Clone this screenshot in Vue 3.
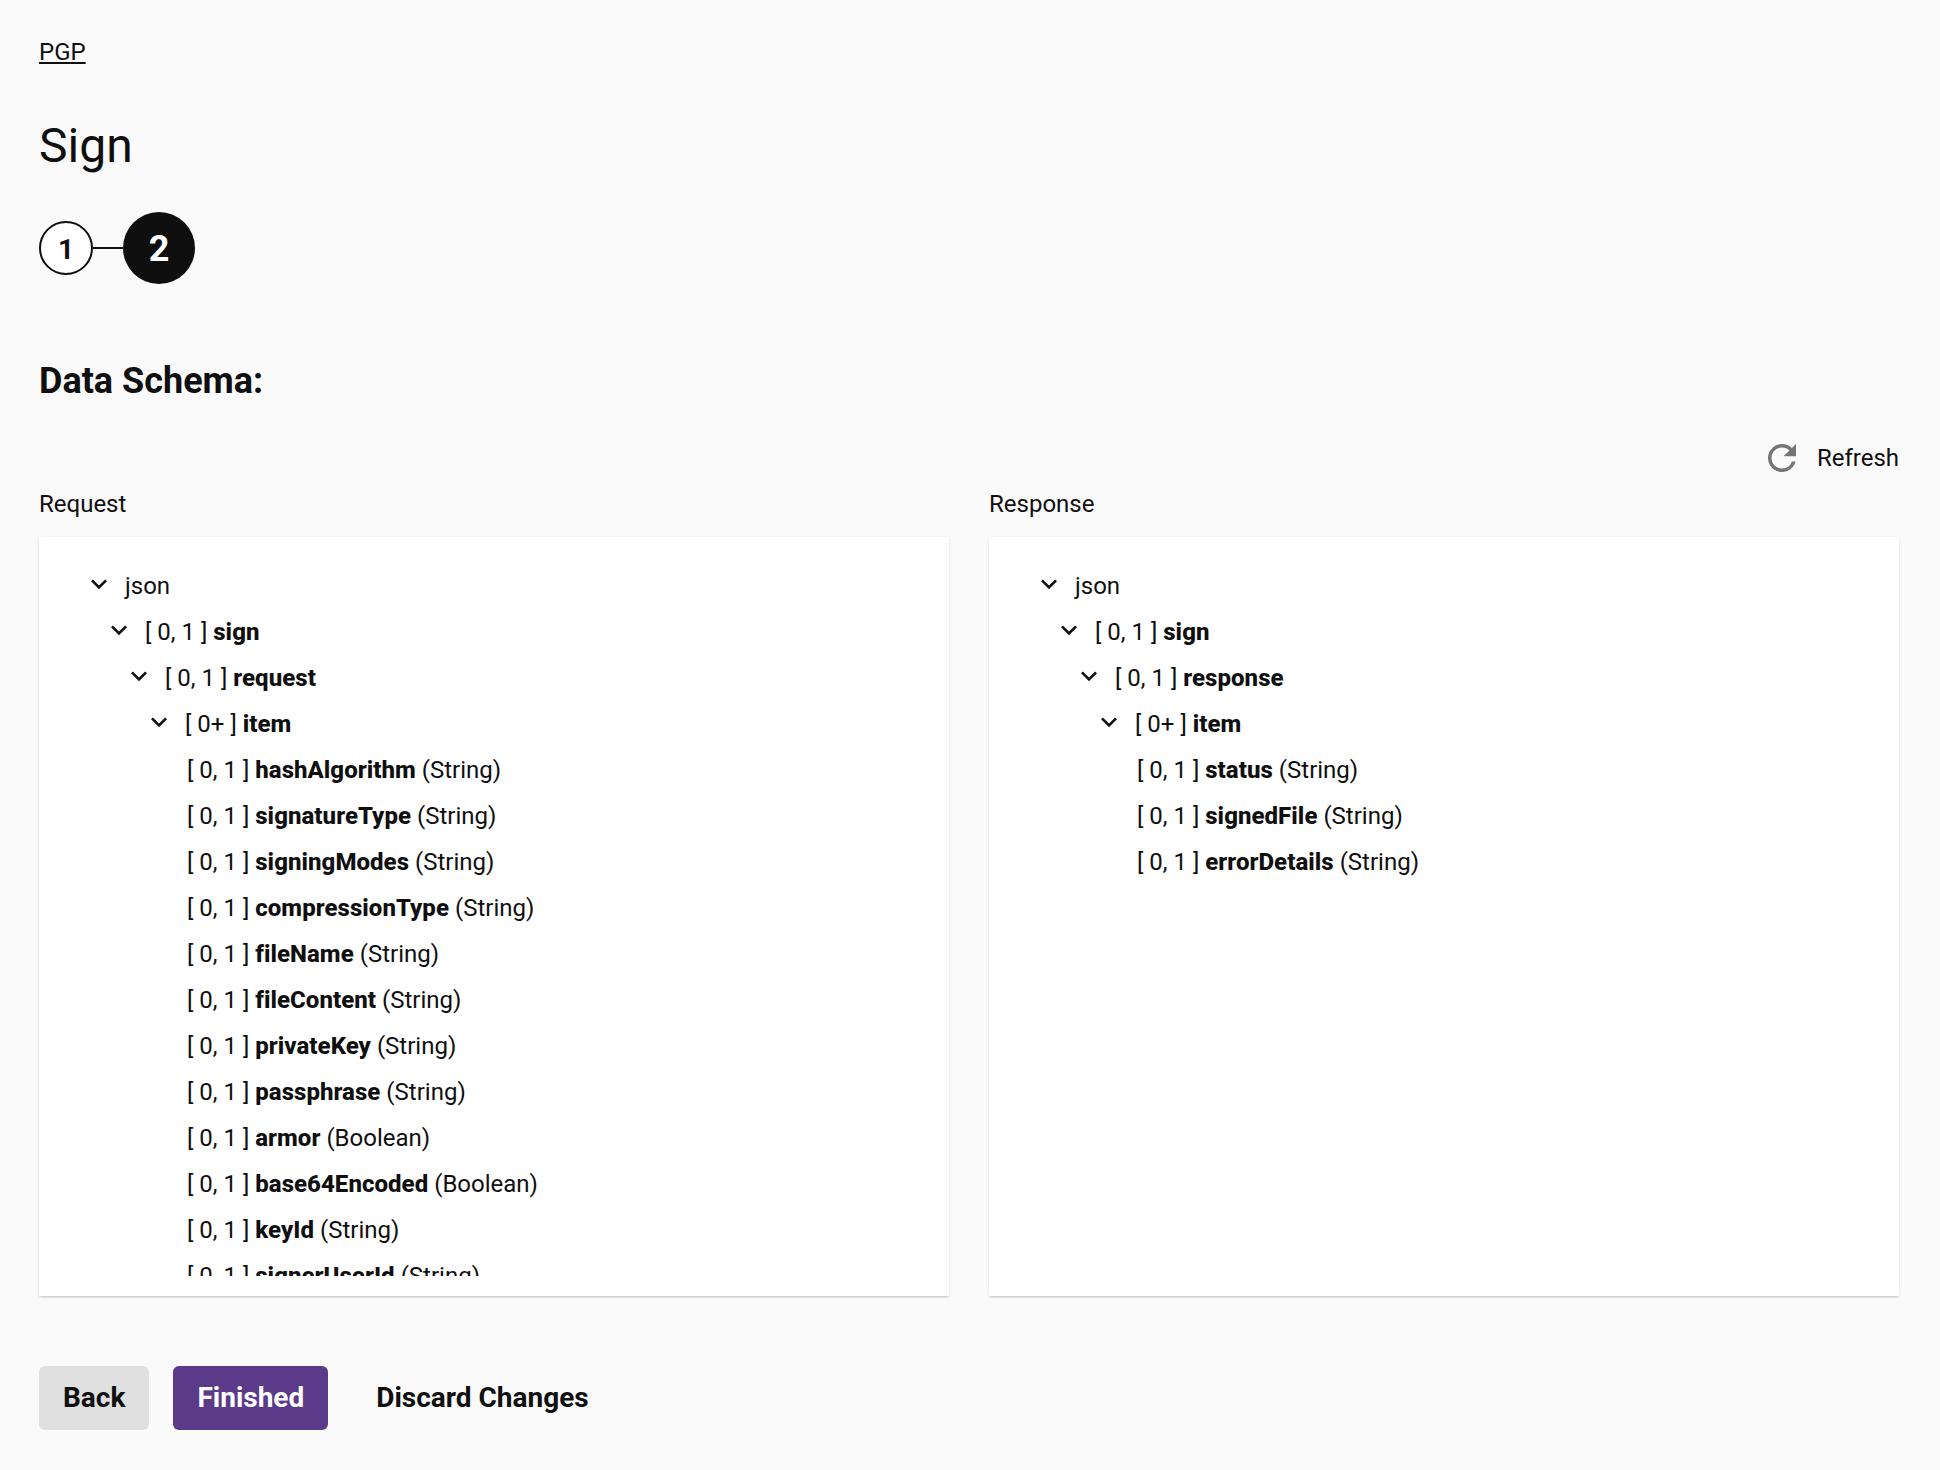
<script setup>
const req = [
  { i: 0, ch: true, t: 'json' },
  { i: 1, ch: true, c: '[ 0, 1 ]', b: 'sign' },
  { i: 2, ch: true, c: '[ 0, 1 ]', b: 'request' },
  { i: 3, ch: true, c: '[ 0+ ]', b: 'item' },
  ...[['hashAlgorithm','String'],['signatureType','String'],['signingModes','String'],['compressionType','String'],['fileName','String'],['fileContent','String'],['privateKey','String'],['passphrase','String'],['armor','Boolean'],['base64Encoded','Boolean'],['keyId','String'],['signerUserId','String']].map(([b, y]) => ({ i: 4, c: '[ 0, 1 ]', b, y }))
]
const res = [
  { i: 0, ch: true, t: 'json' },
  { i: 1, ch: true, c: '[ 0, 1 ]', b: 'sign' },
  { i: 2, ch: true, c: '[ 0, 1 ]', b: 'response' },
  { i: 3, ch: true, c: '[ 0+ ]', b: 'item' },
  ...[['status','String'],['signedFile','String'],['errorDetails','String']].map(([b, y]) => ({ i: 4, c: '[ 0, 1 ]', b, y }))
]
const panels = [{ title: 'Request', rows: req }, { title: 'Response', rows: res }]
</script>

<template>
  <div class="page">
    <a class="crumb">PGP</a>
    <h1 class="title">Sign</h1>
    <div class="stepper">
      <div class="step"><span>1</span></div>
      <div class="line"></div>
      <div class="step active"><span>2</span></div>
    </div>
    <h2 class="schema">Data Schema:</h2>
    <div class="refresh">
      <svg class="refresh-icon" viewBox="0 0 24 24" width="42" height="42"><path fill="#757575" d="M17.65 6.35A7.958 7.958 0 0 0 12 4c-4.42 0-7.99 3.58-7.99 8s3.57 8 7.99 8c3.73 0 6.84-2.55 7.73-6h-2.08A5.99 5.99 0 0 1 12 18c-3.31 0-6-2.69-6-6s2.69-6 6-6c1.66 0 3.14.69 4.22 1.78L13 11h7V4l-2.35 2.35z"/></svg>
      <span>Refresh</span>
    </div>
    <div class="columns">
      <section v-for="p in panels" :key="p.title" class="col">
        <div class="label">{{ p.title }}</div>
        <div class="card">
          <div class="tree">
            <div v-for="(r, n) in p.rows" :key="n" class="row" :class="['lvl' + r.i, { leaf: !r.ch }]">
              <svg v-if="r.ch" class="chev" viewBox="0 0 24 24" width="32" height="32"><path fill="#111" d="M16.59 8.59 12 13.17 7.41 8.59 6 10l6 6 6-6z"/></svg>
              <span v-if="r.t">{{ r.t }}</span>
              <span v-else>{{ r.c }} <b>{{ r.b }}</b><template v-if="r.y"> ({{ r.y }})</template></span>
            </div>
          </div>
        </div>
      </section>
    </div>
    <div class="actions">
      <button class="btn back">Back</button>
      <button class="btn finish">Finished</button>
      <button class="btn discard">Discard Changes</button>
    </div>
  </div>
</template>

<style>
html, body { margin: 0; background: #fafafa; }
</style>

<style scoped>
.page { box-sizing: border-box; width: 1940px; height: 1470px; padding: 38px 41px 0 39px; font-family: Roboto, sans-serif; color: #0f0f0f; background: #fafafa; }
.crumb { display: block; width: max-content; font-size: 24px; line-height: 28px; text-decoration: underline; }
.title { margin: 52px 0 0; font-size: 48px; font-weight: 400; line-height: 56px; }
.stepper { display: flex; align-items: center; margin-top: 38px; height: 72px; }
.step { box-sizing: border-box; width: 54px; height: 54px; border: 2px solid #0f0f0f; border-radius: 50%; display: flex; align-items: center; justify-content: center; font-size: 28px; font-weight: 700; background: #fff; }
.step span { transform: translateY(1px); }
.step.active { width: 72px; height: 72px; border: 0; background: #0f0f0f; color: #fff; font-size: 36px; }
.line { width: 30px; height: 2px; background: #0f0f0f; }
.schema { margin: 75px 0 0; font-size: 36px; line-height: 44px; font-weight: 700; }
.refresh { display: flex; justify-content: flex-end; align-items: center; gap: 14px; margin-top: 32px; height: 46px; font-size: 24px; }
.columns { display: grid; grid-template-columns: 1fr 1fr; gap: 40px; margin-top: 0; }
.label { font-size: 24px; line-height: 28px; margin-top: 9px; }
.card { margin-top: 19px; height: 759px; background: #fff; box-shadow: 0 2px 2px -1px rgba(0,0,0,.16), 0 1px 3px rgba(0,0,0,.1); box-sizing: border-box; padding: 26px 0 20px 0; }
.tree { height: 713px; overflow: hidden; }
.row { display: flex; align-items: center; height: 46px; font-size: 24px; white-space: pre; }
.row b { font-weight: 800; letter-spacing: .05px; }
.chev { flex: none; margin-right: 10px; transform: translateY(-2px); }
.lvl0 { padding-left: 44px; }
.lvl1 { padding-left: 64px; }
.lvl2 { padding-left: 84px; }
.lvl3 { padding-left: 104px; }
.leaf { padding-left: 148px; }
.actions { display: flex; align-items: center; gap: 24px; margin-top: 70px; }
.btn { height: 64px; border: 0; border-radius: 6px; padding: 0 24px 2px; font-family: Roboto, sans-serif; font-size: 28px; font-weight: 700; color: #0f0f0f; background: transparent; }
.back { background: #e0e0e0; }
.finish { background: #5b3a89; color: #fff; }
</style>
